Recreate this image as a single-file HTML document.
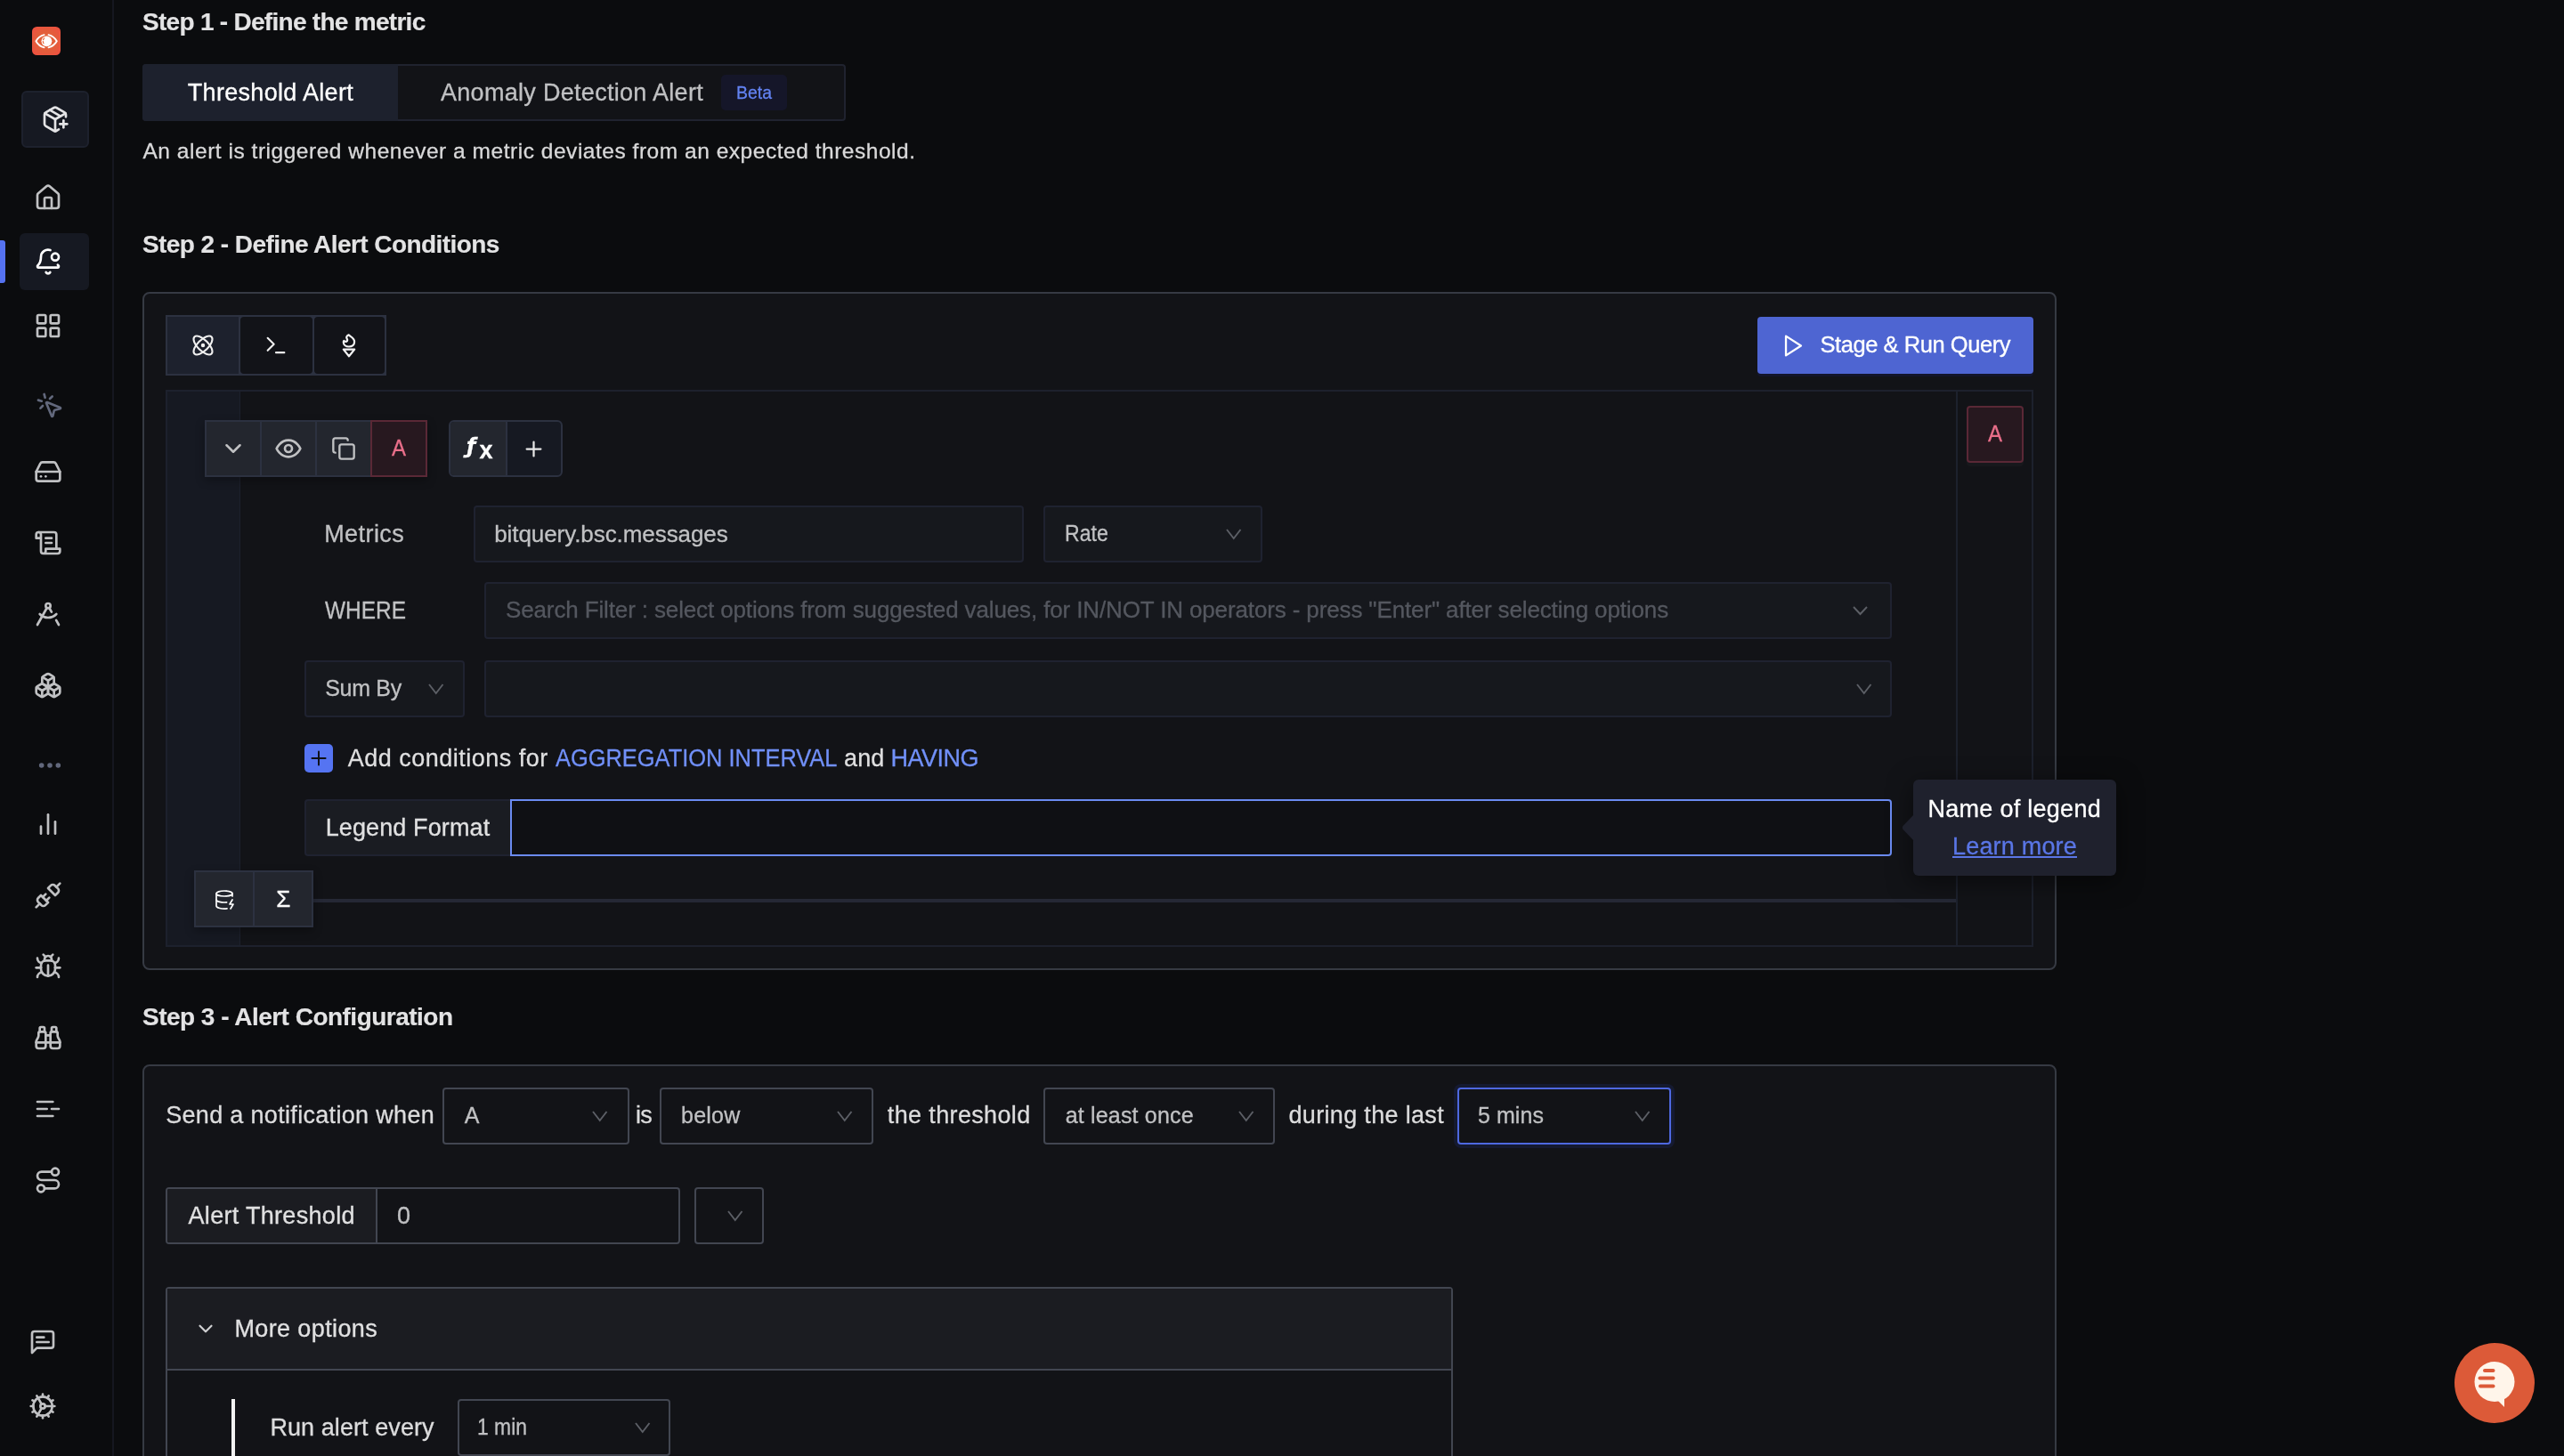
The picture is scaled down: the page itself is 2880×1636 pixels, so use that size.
<!DOCTYPE html>
<html lang="en"><head><meta charset="utf-8"><title>Create Alert - Threshold</title>
<style>
*{margin:0;padding:0}
html,body{width:2880px;height:1636px;overflow:hidden;background:#0b0c0e}
#app{position:absolute;left:0;top:0;width:2880px;height:1636px;overflow:hidden;will-change:transform}
body{position:relative;font-family:"Liberation Sans", sans-serif;-webkit-font-smoothing:antialiased}
.abs,.ic,.t,section,button,nav{position:absolute;display:block}
button{border:none}
.t{white-space:nowrap;line-height:1;font-family:"Liberation Sans", sans-serif;margin:0;-webkit-text-stroke:0.3px currentColor}
h2.t{-webkit-text-stroke:0.15px currentColor}
@media (max-width:2000px){#app{transform:scale(.5);transform-origin:0 0}}
</style></head>
<body>
<main id="app">
<nav class="abs" style="left:0;top:0;width:126px;height:1636px;background:#0b0c0e;border-right:2px solid #15171f"></nav>
<div class="abs" style="left:36px;top:30px;width:32px;height:32px;border-radius:5.500px;background:radial-gradient(circle at 50% 50%,#e1683a 0%,#e35d3b 50%,#f24d41 100%)"></div>
<svg class="ic" width="32" height="32" viewBox="0 0 32 32" style="left:36px;top:30px" fill="none" stroke="#fff" stroke-width="1.900" stroke-linecap="round" stroke-linejoin="round"><path d="M13.600 9.200C9.400 10.200 6.300 12.900 4.400 16.300C6.300 19.700 9.400 22.400 13.600 23.400"/><path d="M18.500 9.200C22.700 10.200 25.800 12.900 27.800 16.300C25.800 19.700 22.700 22.400 18.500 23.400"/><circle cx="16.400" cy="16.300" r="5.900" fill="#fff" stroke="none"/><path d="M13.700 12.900A4.800 4.800 0 0 0 13.700 19.700" stroke="#e5673a" stroke-width="1.200" stroke-dasharray="2.200 1.700"/></svg>
<div class="abs" style="left:24px;top:102px;width:76px;height:64px;box-sizing:border-box;background:#161922;border:2px solid #1d212d;border-radius:6px"></div>
<svg class="ic" width="32" height="32" viewBox="0 0 24 24" fill="none" stroke="#e4e4e6" stroke-width="2" stroke-linecap="round" stroke-linejoin="round" style="left:46.0px;top:118.0px" ><path d="M16 16h6"/><path d="M19 13v6"/><path d="M21 10V8a2 2 0 0 0-1-1.73l-7-4a2 2 0 0 0-2 0l-7 4A2 2 0 0 0 3 8v8a2 2 0 0 0 1 1.73l7 4a2 2 0 0 0 2 0l2-1.14"/><path d="m7.5 4.27 9 5.15"/><polyline points="3.29 7 12 12 20.71 7"/><line x1="12" x2="12" y1="22" y2="12"/></svg>
<svg class="ic" width="32" height="32" viewBox="0 0 24 24" fill="none" stroke="#c0c1c3" stroke-width="2" stroke-linecap="round" stroke-linejoin="round" style="left:38.0px;top:206.0px" ><path d="M15 21v-8a1 1 0 0 0-1-1h-4a1 1 0 0 0-1 1v8"/><path d="M3 10a2 2 0 0 1 .709-1.528l7-5.999a2 2 0 0 1 2.582 0l7 5.999A2 2 0 0 1 21 10v9a2 2 0 0 1-2 2H5a2 2 0 0 1-2-2z"/></svg>
<div class="abs" style="left:22px;top:262px;width:78px;height:64px;background:#161922;border-radius:6px"></div>
<div class="abs" style="left:0px;top:270px;width:6px;height:48px;background:#5572f0;border-radius:0 3px 3px 0"></div>
<svg class="ic" width="32" height="32" viewBox="0 0 24 24" fill="none" stroke="#ffffff" stroke-width="2" stroke-linecap="round" stroke-linejoin="round" style="left:38.0px;top:278.0px" ><path d="M10.268 21a2 2 0 0 0 3.464 0"/><path d="M13.916 2.314A6 6 0 0 0 6 8c0 4.499-1.411 5.956-2.740 7.327A1 1 0 0 0 4 17h16a1 1 0 0 0 .740-1.673 9 9 0 0 1-.585-.665"/><circle cx="18" cy="8" r="3"/></svg>
<svg class="ic" width="32" height="32" viewBox="0 0 24 24" fill="none" stroke="#c0c1c3" stroke-width="2" stroke-linecap="round" stroke-linejoin="round" style="left:38.0px;top:350.0px" ><rect width="7" height="7" x="3" y="3" rx="1"/><rect width="7" height="7" x="14" y="3" rx="1"/><rect width="7" height="7" x="14" y="14" rx="1"/><rect width="7" height="7" x="3" y="14" rx="1"/></svg>
<svg class="ic" width="32" height="32" viewBox="0 0 24 24" fill="none" stroke="#62687c" stroke-width="2" stroke-linecap="round" stroke-linejoin="round" style="left:40.0px;top:440.0px" ><path d="M9.037 9.690a.498.498 0 0 1 .653-.653l11 4.500a.500.500 0 0 1-.074.949l-4.349 1.041a1 1 0 0 0-.740.739l-1.040 4.350a.500.500 0 0 1-.950.074z"/><path d="M7.2 2.2 8 5.1"/><path d="m5.1 8-2.9-.8"/><path d="M14 4.1 12 6"/><path d="m6 12-1.9 2"/></svg>
<svg class="ic" width="32" height="32" viewBox="0 0 24 24" fill="none" stroke="#c0c1c3" stroke-width="2" stroke-linecap="round" stroke-linejoin="round" style="left:38.0px;top:514.0px" ><line x1="22" x2="2" y1="12" y2="12"/><path d="M5.45 5.11 2 12v6a2 2 0 0 0 2 2h16a2 2 0 0 0 2-2v-6l-3.45-6.89A2 2 0 0 0 16.76 4H7.24a2 2 0 0 0-1.79 1.11z"/><line x1="6" x2="6.01" y1="16" y2="16"/><line x1="10" x2="10.01" y1="16" y2="16"/></svg>
<svg class="ic" width="32" height="32" viewBox="0 0 24 24" fill="none" stroke="#c0c1c3" stroke-width="2" stroke-linecap="round" stroke-linejoin="round" style="left:38.0px;top:594.0px" ><path d="M8 21h12a2 2 0 0 0 2-2v-2H10v2a2 2 0 1 1-4 0V5a2 2 0 1 0-4 0v3h4"/><path d="M19 17V5a2 2 0 0 0-2-2H4"/><path d="M15 8h-5"/><path d="M15 12h-5"/></svg>
<svg class="ic" width="32" height="32" viewBox="0 0 24 24" fill="none" stroke="#c0c1c3" stroke-width="2" stroke-linecap="round" stroke-linejoin="round" style="left:38.0px;top:674.0px" ><circle cx="12" cy="5" r="2"/><path d="m3 21 8.02-14.26"/><path d="m12.99 6.74 1.93 3.44"/><path d="M19 12c-3.87 4-10.13 4-14 0"/><path d="m21 21-2.16-3.84"/></svg>
<svg class="ic" width="32" height="32" viewBox="0 0 24 24" fill="none" stroke="#c0c1c3" stroke-width="2" stroke-linecap="round" stroke-linejoin="round" style="left:38.0px;top:754.0px" ><path d="M2.97 12.92A2 2 0 0 0 2 14.63v3.24a2 2 0 0 0 .97 1.71l3 1.8a2 2 0 0 0 2.06 0L12 19v-5.5l-5-3-4.03 2.42Z"/><path d="m7 16.5-4.74-2.85"/><path d="m7 16.5 5-3"/><path d="M7 16.5v5.17"/><path d="M12 13.5V19l3.97 2.38a2 2 0 0 0 2.06 0l3-1.8a2 2 0 0 0 .97-1.71v-3.24a2 2 0 0 0-.97-1.71L17 10.5l-5 3Z"/><path d="m17 16.5-5-3"/><path d="m17 16.5 4.74-2.85"/><path d="M17 16.5v5.17"/><path d="M7.97 4.42A2 2 0 0 0 7 6.13v4.37l5 3 5-3V6.13a2 2 0 0 0-.97-1.71l-3-1.8a2 2 0 0 0-2.06 0l-3 1.8Z"/><path d="M12 8 7.26 5.15"/><path d="m12 8 4.74-2.85"/><path d="M12 13.5V8"/></svg>
<svg class="ic" width="32" height="32" viewBox="0 0 24 24" fill="none" stroke="#62687c" stroke-width="2.2" stroke-linecap="round" stroke-linejoin="round" style="left:40.0px;top:844.0px" ><circle cx="12" cy="12" r="1"/><circle cx="19" cy="12" r="1"/><circle cx="5" cy="12" r="1"/></svg>
<svg class="ic" width="32" height="32" viewBox="0 0 24 24" fill="none" stroke="#c0c1c3" stroke-width="2" stroke-linecap="round" stroke-linejoin="round" style="left:38.0px;top:910.0px" ><line x1="18" x2="18" y1="20" y2="10"/><line x1="12" x2="12" y1="20" y2="4"/><line x1="6" x2="6" y1="20" y2="14"/></svg>
<svg class="ic" width="32" height="32" viewBox="0 0 24 24" fill="none" stroke="#c0c1c3" stroke-width="2" stroke-linecap="round" stroke-linejoin="round" style="left:38.0px;top:990.0px" ><path d="m19 5 3-3"/><path d="m2 22 3-3"/><path d="M6.3 20.3a2.4 2.4 0 0 0 3.4 0L12 18l-6-6-2.3 2.3a2.4 2.4 0 0 0 0 3.4Z"/><path d="M7.5 13.5 10 11"/><path d="M10.5 16.5 13 14"/><path d="m12 6 6 6 2.3-2.3a2.4 2.4 0 0 0 0-3.4l-2.6-2.6a2.4 2.4 0 0 0-3.4 0Z"/></svg>
<svg class="ic" width="32" height="32" viewBox="0 0 24 24" fill="none" stroke="#c0c1c3" stroke-width="2" stroke-linecap="round" stroke-linejoin="round" style="left:38.0px;top:1070.0px" ><path d="m8 2 1.88 1.88"/><path d="M14.12 3.88 16 2"/><path d="M9 7.13v-1a3.003 3.003 0 1 1 6 0v1"/><path d="M12 20c-3.3 0-6-2.7-6-6v-3a4 4 0 0 1 4-4h4a4 4 0 0 1 4 4v3c0 3.3-2.7 6-6 6"/><path d="M12 20v-9"/><path d="M6.53 9C4.6 8.8 3 7.1 3 5"/><path d="M6 13H2"/><path d="M3 21c0-2.1 1.7-3.9 3.8-4"/><path d="M20.97 5c0 2.1-1.6 3.8-3.5 4"/><path d="M22 13h-4"/><path d="M17.2 17c2.1.1 3.8 1.9 3.8 4"/></svg>
<svg class="ic" width="32" height="32" viewBox="0 0 24 24" fill="none" stroke="#c0c1c3" stroke-width="2" stroke-linecap="round" stroke-linejoin="round" style="left:38.0px;top:1150.0px" ><path d="M10 10h4"/><path d="M19 7V4a1 1 0 0 0-1-1h-2a1 1 0 0 0-1 1v3"/><path d="M20 21a2 2 0 0 0 2-2v-3.851c0-1.39-2-2.962-2-4.829V8a1 1 0 0 0-1-1h-4a1 1 0 0 0-1 1v11a2 2 0 0 0 2 2z"/><path d="M22 16H2"/><path d="M4 21a2 2 0 0 1-2-2v-3.851c0-1.39 2-2.962 2-4.829V8a1 1 0 0 1 1-1h4a1 1 0 0 1 1 1v11a2 2 0 0 1-2 2z"/><path d="M9 7V4a1 1 0 0 0-1-1H6a1 1 0 0 0-1 1v3"/></svg>
<svg class="ic" width="32" height="32" viewBox="0 0 24 24" fill="none" stroke="#c0c1c3" stroke-width="2" stroke-linecap="round" stroke-linejoin="round" style="left:38.0px;top:1230.0px" ><path d="M3 6h13"/><path d="M3 12h8"/><path d="M15 12h6"/><path d="M3 18h13"/></svg>
<svg class="ic" width="32" height="32" viewBox="0 0 24 24" fill="none" stroke="#c0c1c3" stroke-width="2" stroke-linecap="round" stroke-linejoin="round" style="left:38.0px;top:1310.0px" ><circle cx="6" cy="19" r="3"/><path d="M9 19h8.5a3.5 3.5 0 0 0 0-7h-11a3.5 3.5 0 0 1 0-7H15"/><circle cx="18" cy="5" r="3"/></svg>
<svg class="ic" width="32" height="32" viewBox="0 0 24 24" fill="none" stroke="#c0c1c3" stroke-width="2" stroke-linecap="round" stroke-linejoin="round" style="left:32.0px;top:1492.0px" ><path d="M21 15a2 2 0 0 1-2 2H7l-4 4V5a2 2 0 0 1 2-2h14a2 2 0 0 1 2 2z"/><path d="M13 8H7"/><path d="M17 12H7"/></svg>
<svg class="ic" width="32" height="32" viewBox="0 0 24 24" fill="none" stroke="#c0c1c3" stroke-width="2" stroke-linecap="round" stroke-linejoin="round" style="left:32.0px;top:1564.0px" ><path d="M12 20a8 8 0 1 0 0-16 8 8 0 0 0 0 16Z"/><path d="M12 14a2 2 0 1 0 0-4 2 2 0 0 0 0 4Z"/><path d="M12 2v2"/><path d="M12 22v-2"/><path d="m17 20.660-1-1.730"/><path d="M11 10.270 7 3.340"/><path d="m20.660 17-1.730-1"/><path d="m3.340 7 1.730 1"/><path d="M14 12h8"/><path d="M2 12h2"/><path d="m20.660 7-1.730 1"/><path d="m3.340 17 1.730-1"/><path d="m17 3.340-1 1.730"/><path d="m11 13.730-4 6.930"/></svg>
<h2 id="t-h1" class="t" style="left:160px;top:11.00px;font-size:28px;color:#e3e3e4;font-weight:700;letter-spacing:-0.715px;">Step 1 - Define the metric</h2>
<div class="abs" style="left:160px;top:72px;width:790px;height:64px;box-sizing:border-box;border:2px solid #20232f;border-radius:4px;background:#121317"></div>
<div class="abs" style="left:160px;top:72px;width:287px;height:64px;background:#1d212d;border-radius:4px 0 0 4px"></div>
<span id="t-tab1" class="t" style="left:210.75px;top:90.84px;font-size:27px;color:#ffffff;font-weight:400;letter-spacing:0.310px;">Threshold Alert</span>
<span id="t-tab2" class="t" style="left:495px;top:90.84px;font-size:27px;color:#c0c1c3;font-weight:400;letter-spacing:0.298px;">Anomaly Detection Alert</span>
<div class="abs" style="left:810px;top:84px;width:74px;height:40px;background:#151629;border-radius:5px"></div>
<span id="t-beta" class="t" style="left:826.7px;top:93.22px;font-size:21px;color:#6383f2;font-weight:400;transform:scaleX(0.9259);transform-origin:0 50%;">Beta</span>
<p id="t-desc" class="t" style="left:160.5px;top:158.01px;font-size:24.5px;color:#d9d9da;font-weight:400;letter-spacing:0.527px;">An alert is triggered whenever a metric deviates from an expected threshold.</p>
<h2 id="t-h2" class="t" style="left:160px;top:261.00px;font-size:28px;color:#e3e3e4;font-weight:700;letter-spacing:-0.570px;">Step 2 - Define Alert Conditions</h2>
<section class="abs" style="left:160px;top:328px;width:2150px;height:762px;box-sizing:border-box;background:#121317;border:2px solid #363a43;border-radius:8px"></section>
<div class="abs" style="left:186px;top:354px;width:248px;height:68px;background:#2c3140"></div>
<div class="abs" style="left:188px;top:356px;width:80px;height:64px;background:#1d212d"></div>
<div class="abs" style="left:270px;top:356px;width:80.5px;height:64px;background:#121318;border-radius:4px"></div>
<div class="abs" style="left:352.5px;top:356px;width:79.5px;height:64px;background:#121318;border-radius:4px"></div>
<svg class="ic" width="28" height="28" viewBox="0 0 24 24" fill="none" stroke="#f0f0f0" stroke-width="1.8" stroke-linecap="round" stroke-linejoin="round" style="left:213.5px;top:374.0px" ><circle cx="12" cy="12" r="1"/><path d="M20.2 20.2c2.040-2.030.020-7.360-4.500-11.900-4.540-4.520-9.870-6.540-11.900-4.500-2.040 2.030-.020 7.360 4.500 11.900 4.540 4.520 9.870 6.540 11.900 4.500Z"/><path d="M15.7 15.7c4.520-4.540 6.540-9.870 4.500-11.900-2.030-2.040-7.360-.020-11.900 4.500-4.520 4.540-6.540 9.870-4.500 11.900 2.030 2.040 7.360.020 11.900-4.500Z"/></svg>
<svg class="ic" width="28" height="28" viewBox="0 0 24 24" fill="none" stroke="#f0f0f0" stroke-width="1.8" stroke-linecap="round" stroke-linejoin="round" style="left:296.0px;top:374.0px" ><polyline points="4 17 10 11 4 5"/><line x1="12" x2="20" y1="19" y2="19"/></svg>
<svg class="ic" width="80" height="60" viewBox="0 0 80 60" style="left:352px;top:358px" fill="none" stroke="#f4f4f4" stroke-width="2.200" stroke-linecap="round" stroke-linejoin="round"><path d="M39.600 18.300C41 20 46.300 21.800 46.100 26C46.100 29.500 43.500 31.500 40 31.500C36.500 31.500 33.800 29.500 33.800 26.500C33.800 25.800 34 25.200 34.300 24.800C35 26.200 37 26.300 38 25C39 23.500 37 22.300 37.200 21C37.400 19.600 38.500 18.800 39.600 18.300Z"/><path d="M33.800 34.600H46.200L40 42.300Z"/></svg>
<button class="abs" style="left:1974px;top:356px;width:310px;height:64px;background:#4e65d2;border-radius:4px;box-shadow:0 3px 0 rgba(20,24,60,.55)"></button>
<svg class="ic" width="29" height="29" viewBox="0 0 24 24" fill="none" stroke="#ffffff" stroke-width="1.9" stroke-linecap="round" stroke-linejoin="round" style="left:2000.0px;top:373.5px" ><polygon points="5 3 19 12 5 21 5 3"/></svg>
<span id="t-run" class="t" style="left:2044.5px;top:374.66px;font-size:25.5px;color:#ffffff;font-weight:400;letter-spacing:-0.449px;">Stage &amp; Run Query</span>
<div class="abs" style="left:186px;top:438px;width:2098px;height:626px;box-sizing:border-box;border:2px solid #1d212d;background:#121317"></div>
<div class="abs" style="left:188px;top:440px;width:81px;height:622px;background:#161922;border-right:1px solid #1d212d"></div>
<div class="abs" style="left:2197px;top:440px;width:2px;height:622px;background:#1d212d"></div>
<div class="abs" style="left:2209px;top:456px;width:64px;height:64px;box-sizing:border-box;background:#27181f;border:2px solid #5a2836;border-radius:4px;box-shadow:0 4px 0 rgba(255,255,255,.025)"></div>
<span id="t-A2" class="t" style="left:2232.7px;top:474.49px;font-size:26px;color:#e96f8a;font-weight:400;transform:scaleX(0.9225);transform-origin:0 50%;">A</span>
<div class="abs" style="left:230px;top:472px;width:250px;height:64px;box-sizing:border-box;background:#23262e;border:2px solid #2c3140;box-shadow:0 4px 10px rgba(0,0,0,.3)"></div>
<div class="abs" style="left:291.5px;top:474px;width:2px;height:60px;background:#2c3140"></div>
<div class="abs" style="left:353.5px;top:474px;width:2px;height:60px;background:#2c3140"></div>
<div class="abs" style="left:416px;top:472px;width:64px;height:64px;box-sizing:border-box;background:#27181f;border:2px solid #5a2836"></div>
<svg class="ic" width="30" height="30" viewBox="0 0 24 24" fill="none" stroke="#c0c1c3" stroke-width="2" stroke-linecap="round" stroke-linejoin="round" style="left:246.5px;top:489.0px" ><path d="m6 9 6 6 6-6"/></svg>
<svg class="ic" width="32" height="32" viewBox="0 0 24 24" fill="none" stroke="#c0c1c3" stroke-width="2" stroke-linecap="round" stroke-linejoin="round" style="left:308.0px;top:488.0px" ><path d="M2 12s3-7 10-7 10 7 10 7-3 7-10 7-10-7-10-7Z"/><circle cx="12" cy="12" r="3"/></svg>
<svg class="ic" width="28" height="28" viewBox="0 0 24 24" fill="none" stroke="#c0c1c3" stroke-width="2" stroke-linecap="round" stroke-linejoin="round" style="left:372.0px;top:490.0px" ><rect width="14" height="14" x="8" y="8" rx="2" ry="2"/><path d="M4 16c-1.100 0-2-.900-2-2V4c0-1.100.900-2 2-2h10c1.100 0 2 .900 2 2"/></svg>
<span id="t-A1" class="t" style="left:439.75px;top:489.99px;font-size:26px;color:#e96f8a;font-weight:400;transform:scaleX(0.9225);transform-origin:0 50%;">A</span>
<div class="abs" style="left:504px;top:472px;width:128px;height:64px;box-sizing:border-box;background:#161922;border:2px solid #2c3140;border-radius:6px"></div>
<div class="abs" style="left:506px;top:474px;width:62px;height:60px;background:#23262e;border-radius:4px 0 0 4px;border-right:2px solid #2c3140"></div>
<span id="t-fxf" class="t" style="left:524.0px;top:489.71px;font-size:23.5px;color:#ffffff;font-weight:700;font-family:'DejaVu Sans',sans-serif;font-style:italic;">&#402;</span>
<span id="t-fxx" class="t" style="left:538.6px;top:493.24px;font-size:27px;color:#ffffff;font-weight:700;">x</span>
<svg class="ic" width="27" height="27" viewBox="0 0 24 24" fill="none" stroke="#e8e8e8" stroke-width="2" stroke-linecap="round" stroke-linejoin="round" style="left:586.0px;top:490.5px" ><path d="M5 12h14"/><path d="M12 5v14"/></svg>
<span id="t-metrics" class="t" style="left:364.2px;top:586.84px;font-size:27px;color:#c0c1c3;font-weight:400;letter-spacing:0.429px;">Metrics</span>
<div class="abs" style="left:532px;top:568px;width:618px;height:64px;box-sizing:border-box;background:#16181d;border:2px solid #1f2230;border-radius:4px"></div>
<span id="t-metricv" class="t" style="left:555.2px;top:587.49px;font-size:26px;color:#c0c1c3;font-weight:400;letter-spacing:-0.071px;">bitquery.bsc.messages</span>
<div class="abs" style="left:1172px;top:568px;width:246px;height:64px;box-sizing:border-box;background:#16181d;border:2px solid #1f2230;border-radius:4px"></div>
<span id="t-rate" class="t" style="left:1196.2px;top:586.84px;font-size:25px;color:#c0c1c3;font-weight:400;transform:scaleX(0.9231);transform-origin:0 50%;">Rate</span>
<svg class="ic" width="19.5" height="14" viewBox="-2 -2 19.5 14" style="left:1376.0px;top:593.0px" fill="none" stroke="#5c5f66" stroke-width="1.9" stroke-linecap="butt" stroke-linejoin="miter"><polyline points="0,0 7.75,10 15.5,0"/></svg>
<span id="t-where" class="t" style="left:364.5px;top:673.14px;font-size:27px;color:#c0c1c3;font-weight:400;transform:scaleX(0.9055);transform-origin:0 50%;">WHERE</span>
<div class="abs" style="left:544px;top:654px;width:1581px;height:64px;box-sizing:border-box;background:#16181d;border:2px solid #1f2230;border-radius:4px"></div>
<span id="t-ph" class="t" style="left:568px;top:671.99px;font-size:26px;color:#54575f;font-weight:400;letter-spacing:-0.132px;">Search Filter : select options from suggested values, for IN/NOT IN operators - press "Enter" after selecting options</span>
<svg class="ic" width="19" height="12" viewBox="-2 -2 19 12" style="left:2079.5px;top:680.0px" fill="none" stroke="#5c5f66" stroke-width="1.9" stroke-linecap="butt" stroke-linejoin="miter"><polyline points="0,0 7.5,8 15,0"/></svg>
<div class="abs" style="left:342px;top:742px;width:180px;height:64px;box-sizing:border-box;background:#16181d;border:2px solid #1f2230;border-radius:4px"></div>
<span id="t-sumby" class="t" style="left:365.2px;top:760.84px;font-size:25px;color:#c0c1c3;font-weight:400;letter-spacing:-0.297px;">Sum By</span>
<svg class="ic" width="19.5" height="14" viewBox="-2 -2 19.5 14" style="left:480.25px;top:767.0px" fill="none" stroke="#5c5f66" stroke-width="1.9" stroke-linecap="butt" stroke-linejoin="miter"><polyline points="0,0 7.75,10 15.5,0"/></svg>
<div class="abs" style="left:544px;top:742px;width:1581px;height:64px;box-sizing:border-box;background:#16181d;border:2px solid #1f2230;border-radius:4px"></div>
<svg class="ic" width="19.5" height="14" viewBox="-2 -2 19.5 14" style="left:2083.55px;top:767.0px" fill="none" stroke="#5c5f66" stroke-width="1.9" stroke-linecap="butt" stroke-linejoin="miter"><polyline points="0,0 7.75,10 15.5,0"/></svg>
<div class="abs" style="left:342px;top:836px;width:32px;height:32px;background:#5574f2;border-radius:5px"></div>
<svg class="ic" width="26" height="26" viewBox="0 0 24 24" fill="none" stroke="#0e1016" stroke-width="1.8" stroke-linecap="round" stroke-linejoin="round" style="left:345.0px;top:839.0px" ><path d="M5 12h14"/><path d="M12 5v14"/></svg>
<span id="t-addc" class="t" style="left:390.75px;top:839.09px;font-size:27px;color:#dfdfe0;font-weight:400;letter-spacing:0.493px;">Add conditions for&nbsp;</span>
<span id="t-aggr" class="t" style="left:623.5px;top:839.09px;font-size:27px;color:#7190f9;font-weight:400;transform:scaleX(0.9417);transform-origin:0 50%;">AGGREGATION INTERVAL</span>
<span id="t-and" class="t" style="left:948px;top:839.09px;font-size:27px;color:#dfdfe0;font-weight:400;letter-spacing:0.146px;">and</span>
<span id="t-having" class="t" style="left:1000.5px;top:839.09px;font-size:27px;color:#7190f9;font-weight:400;letter-spacing:-0.503px;">HAVING</span>
<div class="abs" style="left:342px;top:898px;width:232px;height:64px;box-sizing:border-box;background:#1a1c22;border:2px solid #1f2230;border-right:none;border-radius:4px 0 0 4px"></div>
<span id="t-legend" class="t" style="left:365.75px;top:916.84px;font-size:27px;color:#e0e0e1;font-weight:400;letter-spacing:0.107px;">Legend Format</span>
<div class="abs" style="left:573px;top:898px;width:1552px;height:64px;box-sizing:border-box;background:#0f1014;border:2px solid #6b8bf2;border-radius:0 4px 4px 0"></div>
<div class="abs" style="left:350px;top:1010px;width:1847px;height:4px;background:#252835"></div>
<div class="abs" style="left:218px;top:978px;width:134px;height:64px;box-sizing:border-box;background:#23262e;border:2px solid #2c3140;box-shadow:0 4px 10px rgba(0,0,0,.3)"></div>
<div class="abs" style="left:284px;top:980px;width:2px;height:60px;background:#2c3140"></div>
<svg class="ic" width="24" height="24" viewBox="0 0 24 24" fill="none" stroke="#ffffff" stroke-width="1.7" stroke-linecap="round" stroke-linejoin="round" style="left:239.5px;top:998.5px" ><ellipse cx="12" cy="5" rx="9" ry="3"/><path d="M3 5V19A9 3 0 0 0 15 21.840"/><path d="M21 5V8"/><path d="M21 12L18 17H22L19 22"/><path d="M3 12A9 3 0 0 0 14.590 14.870"/></svg>
<span id="t-sigma" class="t" style="left:310.3px;top:997.24px;font-size:26px;color:#ffffff;font-weight:400;">&#931;</span>
<div class="abs" style="left:2149px;top:876px;width:228px;height:108px;background:#1f212d;border-radius:6px;box-shadow:0 6px 28px rgba(0,0,0,.5)"></div>
<svg class="ic" width="16" height="30" viewBox="0 0 16 30" style="left:2135px;top:915px"><path d="M15 0 L2.500 13 Q1 15 2.500 17 L15 30 Z" fill="#1f212d"/></svg>
<span id="t-tt1" class="t" style="left:2165.5px;top:896.09px;font-size:27px;color:#ffffff;font-weight:400;letter-spacing:0.277px;">Name of legend</span>
<a id="t-tt2" class="t" style="left:2193px;top:937.84px;font-size:27px;color:#5a76e6;font-weight:400;letter-spacing:0.192px;text-decoration:underline;text-decoration-thickness:2px;text-underline-offset:2.3px">Learn more</a>
<h2 id="t-h3" class="t" style="left:160px;top:1129.00px;font-size:28px;color:#e3e3e4;font-weight:700;letter-spacing:-0.517px;">Step 3 - Alert Configuration</h2>
<section class="abs" style="left:160px;top:1196px;width:2150px;height:500px;box-sizing:border-box;background:#121317;border:2px solid #363a43;border-radius:8px"></section>
<span id="t-send" class="t" style="left:186.15px;top:1239.84px;font-size:27px;color:#dcdcdd;font-weight:400;letter-spacing:0.324px;">Send a notification when</span>
<div class="abs" style="left:497px;top:1222px;width:210px;height:64px;box-sizing:border-box;background:#121317;border:2px solid #424651;border-radius:4px;"></div>
<span id="t-selA" class="t" style="left:521.75px;top:1240.84px;font-size:25px;color:#c0c1c3;font-weight:400;letter-spacing:0.312px;">A</span>
<svg class="ic" width="19.5" height="14" viewBox="-2 -2 19.5 14" style="left:664.25px;top:1247.0px" fill="none" stroke="#5c5f66" stroke-width="1.9" stroke-linecap="butt" stroke-linejoin="miter"><polyline points="0,0 7.75,10 15.5,0"/></svg>
<span id="t-is" class="t" style="left:714px;top:1239.84px;font-size:27px;color:#dcdcdd;font-weight:400;letter-spacing:-0.750px;">is</span>
<div class="abs" style="left:741px;top:1222px;width:240px;height:64px;box-sizing:border-box;background:#121317;border:2px solid #424651;border-radius:4px;"></div>
<span id="t-below" class="t" style="left:765px;top:1240.84px;font-size:25px;color:#c0c1c3;font-weight:400;letter-spacing:0.234px;">below</span>
<svg class="ic" width="19.5" height="14" viewBox="-2 -2 19.5 14" style="left:939.0px;top:1247.0px" fill="none" stroke="#5c5f66" stroke-width="1.9" stroke-linecap="butt" stroke-linejoin="miter"><polyline points="0,0 7.75,10 15.5,0"/></svg>
<span id="t-thr" class="t" style="left:996.85px;top:1239.84px;font-size:27px;color:#dcdcdd;font-weight:400;letter-spacing:0.357px;">the threshold</span>
<div class="abs" style="left:1172px;top:1222px;width:260px;height:64px;box-sizing:border-box;background:#121317;border:2px solid #424651;border-radius:4px;"></div>
<span id="t-alo" class="t" style="left:1196.75px;top:1240.84px;font-size:25px;color:#c0c1c3;font-weight:400;letter-spacing:0.172px;">at least once</span>
<svg class="ic" width="19.5" height="14" viewBox="-2 -2 19.5 14" style="left:1390.25px;top:1247.0px" fill="none" stroke="#5c5f66" stroke-width="1.9" stroke-linecap="butt" stroke-linejoin="miter"><polyline points="0,0 7.75,10 15.5,0"/></svg>
<span id="t-during" class="t" style="left:1447.5px;top:1239.84px;font-size:27px;color:#dcdcdd;font-weight:400;letter-spacing:0.326px;">during the last</span>
<div class="abs" style="left:1637px;top:1222px;width:240px;height:64px;box-sizing:border-box;background:#121317;border:2px solid #4e68e0;border-radius:4px;box-shadow:0 0 0 4px #151a30;"></div>
<span id="t-mins" class="t" style="left:1660px;top:1240.84px;font-size:25px;color:#c0c1c3;font-weight:400;letter-spacing:0.060px;">5 mins</span>
<svg class="ic" width="19.5" height="14" viewBox="-2 -2 19.5 14" style="left:1835.25px;top:1247.0px" fill="none" stroke="#5c5f66" stroke-width="1.9" stroke-linecap="butt" stroke-linejoin="miter"><polyline points="0,0 7.75,10 15.5,0"/></svg>
<div class="abs" style="left:186px;top:1334px;width:578px;height:64px;box-sizing:border-box;background:#121317;border:2px solid #424651;border-radius:4px"></div>
<div class="abs" style="left:188px;top:1336px;width:234px;height:60px;background:#1b1c21;border-right:2px solid #424651;border-radius:2px 0 0 2px"></div>
<span id="t-athr" class="t" style="left:211.55px;top:1352.84px;font-size:27px;color:#e0e0e1;font-weight:400;letter-spacing:0.310px;">Alert Threshold</span>
<span id="t-zero" class="t" style="left:446px;top:1352.84px;font-size:27px;color:#c0c1c3;font-weight:400;letter-spacing:-0.031px;">0</span>
<div class="abs" style="left:780px;top:1334px;width:78px;height:64px;box-sizing:border-box;background:#121317;border:2px solid #424651;border-radius:4px;"></div>
<svg class="ic" width="19.5" height="14" viewBox="-2 -2 19.5 14" style="left:816.0px;top:1359.0px" fill="none" stroke="#5c5f66" stroke-width="1.9" stroke-linecap="butt" stroke-linejoin="miter"><polyline points="0,0 7.75,10 15.5,0"/></svg>
<div class="abs" style="left:186px;top:1446px;width:1446px;height:250px;box-sizing:border-box;background:#121317;border:2px solid #424651;border-radius:4px 4px 0 0"></div>
<div class="abs" style="left:188px;top:1448px;width:1442px;height:90px;background:#1b1c21;border-bottom:2px solid #424651"></div>
<svg class="ic" width="26" height="26" viewBox="0 0 24 24" fill="none" stroke="#d0d0d2" stroke-width="2" stroke-linecap="round" stroke-linejoin="round" style="left:217.5px;top:1479.5px" ><path d="m6 9 6 6 6-6"/></svg>
<span id="t-more" class="t" style="left:263.4px;top:1480.34px;font-size:27px;color:#e0e0e1;font-weight:400;letter-spacing:0.388px;">More options</span>
<div class="abs" style="left:260px;top:1572px;width:4px;height:70px;background:#f2f2f2"></div>
<span id="t-runev" class="t" style="left:303.4px;top:1590.84px;font-size:27px;color:#dcdcdd;font-weight:400;letter-spacing:0.077px;">Run alert every</span>
<div class="abs" style="left:514px;top:1572px;width:239px;height:64px;box-sizing:border-box;background:#121317;border:2px solid #424651;border-radius:4px;"></div>
<span id="t-onemin" class="t" style="left:536.3px;top:1590.84px;font-size:25px;color:#c0c1c3;font-weight:400;transform:scaleX(0.9159);transform-origin:0 50%;">1 min</span>
<svg class="ic" width="19.5" height="14" viewBox="-2 -2 19.5 14" style="left:712.0px;top:1597.0px" fill="none" stroke="#5c5f66" stroke-width="1.9" stroke-linecap="butt" stroke-linejoin="miter"><polyline points="0,0 7.75,10 15.5,0"/></svg>
<div class="abs" style="left:2757px;top:1509px;width:90px;height:90px;border-radius:50%;background:#dc5a38"></div>
<svg class="ic" width="90" height="90" viewBox="0 0 90 90" style="left:2757px;top:1509px"><circle cx="45" cy="43.500" r="22.500" fill="#fff5ea"/><path d="M48 64 L56 72 L56 58 Z" fill="#fff5ea"/><g stroke="#dc5a38" stroke-width="4" stroke-linecap="round"><path d="M34 31h9.500"/><path d="M28.500 39.600h15"/><path d="M29 48.400h14.500"/></g></svg>
</main>
</body></html>
